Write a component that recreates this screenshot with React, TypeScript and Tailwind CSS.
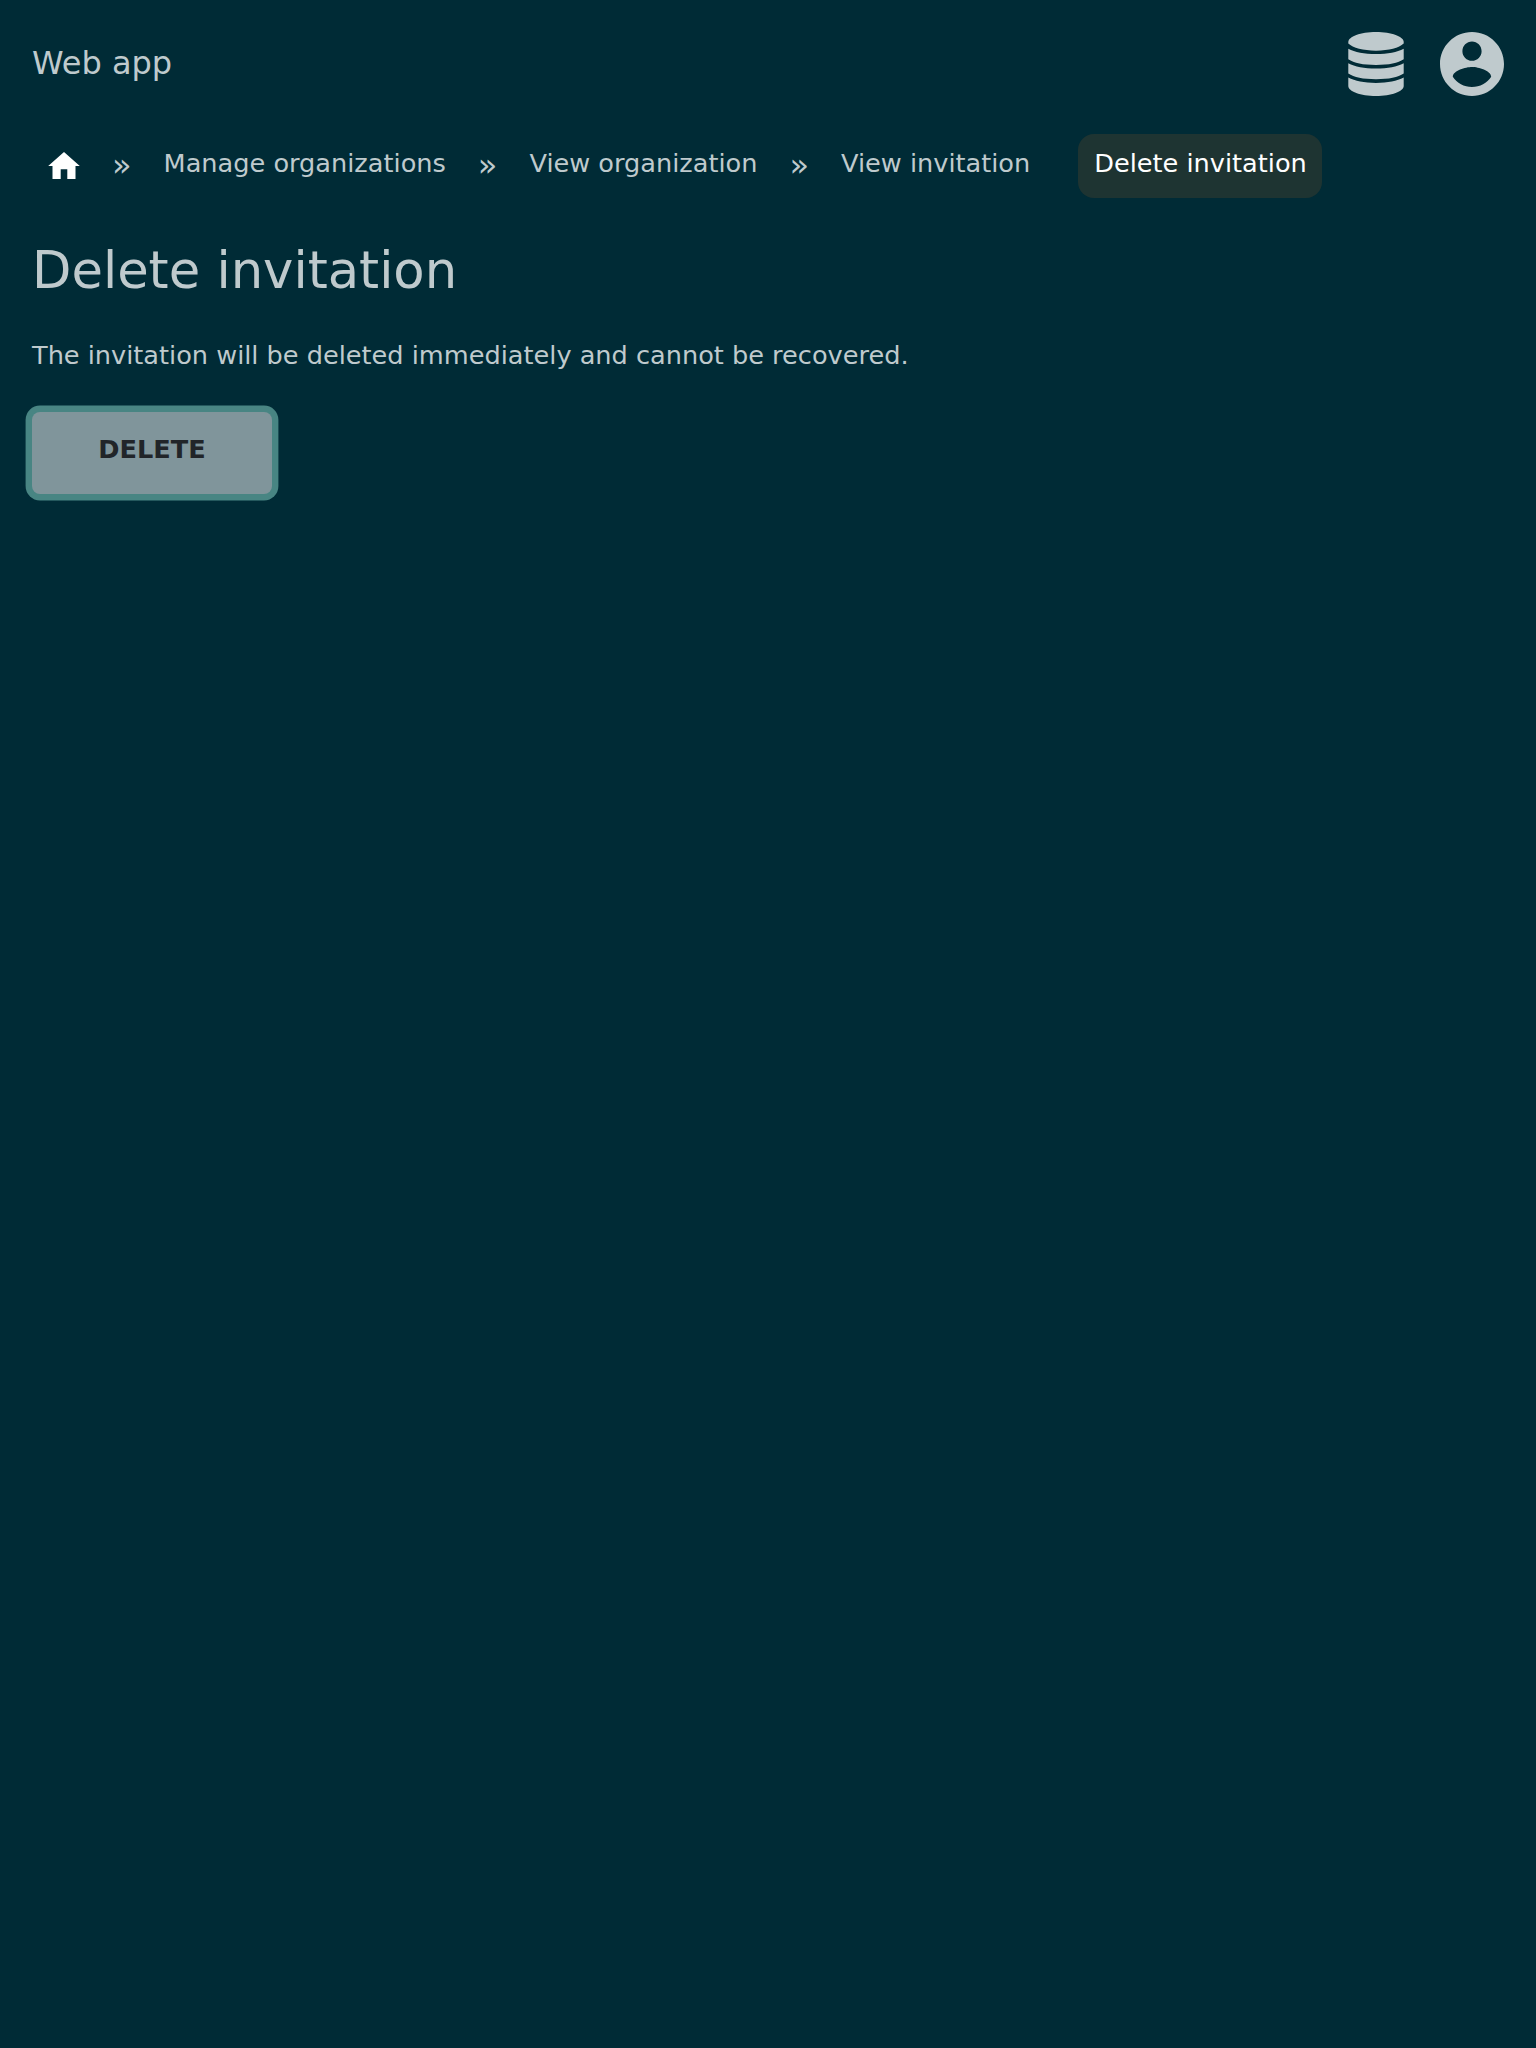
const trail = ["Manage organizations", "View organization", "View invitation"];

function DatabaseIcon() {
  return (
    <svg className="h-16 w-14" viewBox="0 0 56 64" fill="currentColor">
      <path d="M28 0C12.500 0 .3 4.600 .3 10v1.600C5 16 15 18.700 28 18.700s23-2.700 27.700-7.100V10C55.700 4.600 43.500 0 28 0z" />
      <path d="M.3 16.800C7 20.300 16 22.100 28 22.100S49 20.300 55.700 16.800v10.400C50 31 41 32.900 28 32.900S6 31 .3 27.200z" />
      <path d="M.3 31.200C7 34.700 16 36.500 28 36.500S49 34.700 55.700 31.200v10.400C50 45.400 41 47.300 28 47.300S6 45.400 .3 41.600z" />
      <path d="M.3 45.600C7 49.100 16 50.900 28 50.900S49 49.100 55.700 45.600V54C55.700 59.400 43.500 64 28 64S.3 59.400 .3 54z" />
    </svg>
  );
}

function AccountIcon() {
  return (
    <svg className="size-16" viewBox="2 2 20 20" fill="currentColor">
      <path d="M12 2C6.480 2 2 6.480 2 12s4.480 10 10 10 10-4.480 10-10S17.520 2 12 2zm0 3c1.660 0 3 1.340 3 3s-1.340 3-3 3-3-1.340-3-3 1.340-3 3-3zm0 14.200c-2.500 0-4.710-1.280-6-3.220.03-1.990 4-3.080 6-3.080s5.970 1.090 6 3.080c-1.290 1.940-3.500 3.220-6 3.220z" />
    </svg>
  );
}

function HomeIcon() {
  return (
    <svg className="h-[27px] w-8" viewBox="0 0 32 27" fill="currentColor">
      <path d="M16 0 31.800 14h-4.300v13h-8.200v-9.800h-6.600V27H4.500V14H.2z" />
    </svg>
  );
}

export default function App() {
  return (
    <div className="min-h-[2048px] bg-[#002b36] text-[#bfcacd] [font-family:'DejaVu_Sans',sans-serif]">
      <header className="flex h-32 items-center justify-between px-8">
        <span className="pb-0.5 text-[32px] leading-[48px]">Web app</span>
        <div className="flex items-center gap-9">
          <DatabaseIcon />
          <AccountIcon />
        </div>
      </header>
      <nav className="mt-1.5 flex h-16 pl-8 text-[25.6px] leading-[38px]">
        <a className="px-4 pt-[18px] text-white"><HomeIcon /></a>
        {trail.map((item) => (
          <div key={item} className="flex">
            <span className="px-4 pt-3 text-[32px] leading-[38px]">»</span>
            <a className="px-4 pt-2.5">{item}</a>
          </div>
        ))}
        <span className="ml-8 rounded-2xl bg-[#1e3432] pt-2.5 pr-[15.5px] pl-4 text-white">Delete invitation</span>
      </nav>
      <main className="px-8">
        <h1 className="mt-[34px] text-[51.2px] leading-[76px]">Delete invitation</h1>
        <p className="mt-7 text-[25.6px] leading-[38px]">The invitation will be deleted immediately and cannot be recovered.</p>
        <button className="mt-[38px] block h-[82px] w-[240px] rounded-lg bg-[#80959b] pb-2 text-[25.6px] font-bold text-[#212529] ring-[6.4px] ring-[#488583]">DELETE</button>
      </main>
    </div>
  );
}
